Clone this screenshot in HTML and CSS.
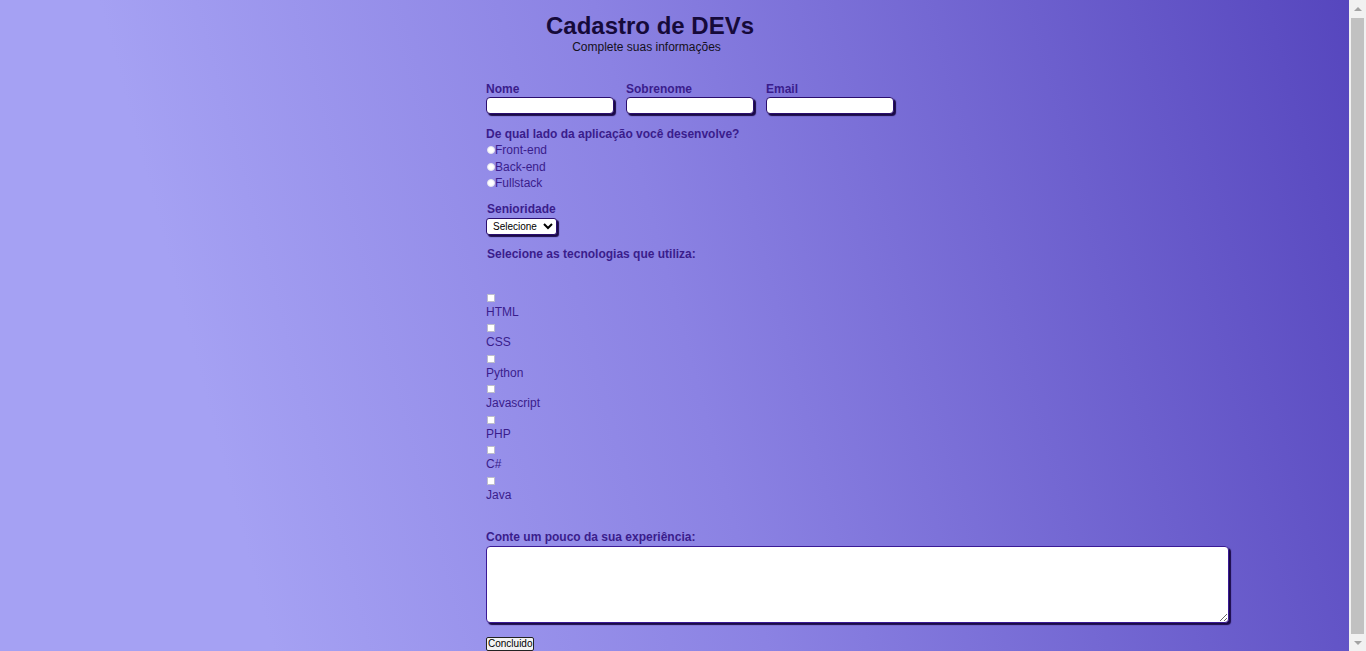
FILE: index.html
```html
<!DOCTYPE html>
<html lang="pt-BR">
<head>
<meta charset="utf-8">
<title>Cadastro de DEVs</title>
<link rel="stylesheet" href="styles.css">
</head>
<body>
<div class="page">
  <header class="header">
    <h1 class="title">Cadastro de DEVs</h1>
    <p class="subtitle">Complete suas informações</p>
  </header>
  <form class="form">
    <div class="row-fields">
      <div class="field">
        <label class="lbl" for="nome">Nome</label>
        <input class="txt" id="nome" type="text">
      </div>
      <div class="field">
        <label class="lbl" for="sobrenome">Sobrenome</label>
        <input class="txt" id="sobrenome" type="text">
      </div>
      <div class="field">
        <label class="lbl" for="email">Email</label>
        <input class="txt" id="email" type="email">
      </div>
    </div>

    <div class="group">
      <p class="lbl lbl-q">De qual lado da aplicação você desenvolve?</p>
      <label class="radio-row"><input class="radio" type="radio" name="lado">Front-end</label>
      <label class="radio-row"><input class="radio" type="radio" name="lado">Back-end</label>
      <label class="radio-row"><input class="radio" type="radio" name="lado">Fullstack</label>
    </div>

    <div class="group-sen">
      <label class="lbl lbl-sen" for="sen">Senioridade</label>
      <select class="select" id="sen">
        <option>Selecione</option>
        <option>Júnior</option>
        <option>Pleno</option>
        <option>Sênior</option>
      </select>
    </div>

    <p class="lbl lbl-tech">Selecione as tecnologias que utiliza:</p>
    <div class="techs">
      <div class="tech"><input class="check" type="checkbox" id="t1"><label class="tech-lbl" for="t1">HTML</label></div>
      <div class="tech"><input class="check" type="checkbox" id="t2"><label class="tech-lbl" for="t2">CSS</label></div>
      <div class="tech"><input class="check" type="checkbox" id="t3"><label class="tech-lbl" for="t3">Python</label></div>
      <div class="tech"><input class="check" type="checkbox" id="t4"><label class="tech-lbl" for="t4">Javascript</label></div>
      <div class="tech"><input class="check" type="checkbox" id="t5"><label class="tech-lbl" for="t5">PHP</label></div>
      <div class="tech"><input class="check" type="checkbox" id="t6"><label class="tech-lbl" for="t6">C#</label></div>
      <div class="tech"><input class="check" type="checkbox" id="t7"><label class="tech-lbl" for="t7">Java</label></div>
    </div>

    <label class="lbl lbl-exp" for="exp">Conte um pouco da sua experiência:</label>
    <textarea class="area" id="exp"></textarea>

    <button class="btn" type="submit">Concluido</button>
  </form>
</div>

<div class="scrollbar" aria-hidden="true">
  <div class="sb-arrow sb-up"></div>
  <div class="sb-track"><div class="sb-thumb"></div></div>
  <div class="sb-arrow sb-down"></div>
</div>
</body>
</html>
```

FILE: styles.css
```css
html, body {
  margin: 0;
  padding: 0;
}

body {
  min-height: 100%;
  background: linear-gradient(75deg, #a5a1f3 18%, #8b82e3 50%, #5545bd 100%);
  font-family: "Liberation Sans", Arial, sans-serif;
  color: #3a1d8c;
}

.page {
  padding: 12px 17px 20px 486px;
}

.header {
  width: 328px;
  text-align: center;
}

.title {
  margin: 0;
  font-size: 24px;
  line-height: 28px;
  font-weight: bold;
  color: #160a3a;
}

.subtitle {
  margin: 0;
  padding-right: 7px;
  font-size: 12px;
  line-height: 14px;
  color: #141020;
}

.form {
  display: flex;
  flex-direction: column;
  align-items: flex-start;
}

.lbl {
  display: block;
  margin: 0;
  font-size: 12px;
  line-height: 14px;
  font-weight: bold;
  color: #3a1d8c;
}

.row-fields {
  display: flex;
  gap: 12px;
  margin-top: 28px;
}

.field {
  display: flex;
  flex-direction: column;
}

.txt {
  box-sizing: border-box;
  width: 128px;
  height: 17px;
  margin: 1px 0 0 0;
  padding: 0 4px;
  border: 1px solid #2a0e6e;
  border-radius: 4px;
  background: #fff;
  box-shadow: 2px 2px 1px #1a0946;
  font-size: 12px;
}

.group {
  margin-top: 13px;
  display: flex;
  flex-direction: column;
}

.lbl-q {
  margin-bottom: 1px;
}

.radio-row {
  display: flex;
  align-items: center;
  height: 16.5px;
  font-size: 12px;
  line-height: 14px;
  color: #3a1d8c;
}

.radio {
  appearance: none;
  -webkit-appearance: none;
  box-sizing: border-box;
  width: 8px;
  height: 8px;
  margin: 0 0 0 1px;
  border-radius: 50%;
  background: #fff;
  border: 1px solid #e4e4f0;
}

.group-sen {
  margin-top: 10px;
  display: flex;
  flex-direction: column;
  align-items: flex-start;
}

.lbl-sen {
  margin-left: 1px;
}

.select {
  box-sizing: border-box;
  width: 71px;
  height: 17px;
  margin: 2px 0 0 0;
  padding: 0 0 0 2px;
  border: 1px solid #2a0e6e;
  border-radius: 3px;
  background: #fff;
  box-shadow: 2px 2px 1px #1a0946;
  font-family: "Liberation Sans", Arial, sans-serif;
  font-size: 10px;
  color: #000;
}

.lbl-tech {
  margin-top: 12px;
  margin-left: 1px;
}

.techs {
  margin-top: 33.5px;
  display: flex;
  flex-direction: column;
}

.tech {
  display: flex;
  flex-direction: column;
  align-items: flex-start;
  height: 30.45px;
}

.check {
  appearance: none;
  -webkit-appearance: none;
  box-sizing: border-box;
  width: 8px;
  height: 8px;
  margin: 0 0 3px 1px;
  background: #fff;
  border: 1px solid #bdbdcc;
}

.tech-lbl {
  font-size: 12px;
  line-height: 14px;
  color: #3a1d8c;
}

.lbl-exp {
  margin-top: 23px;
}

.area {
  box-sizing: border-box;
  width: 743px;
  height: 77px;
  margin: 1.5px 0 0 0;
  border: 1.5px solid #3a1a96;
  border-radius: 4px;
  background: #fff;
  box-shadow: 2px 2px 1px #1a0946;
  resize: both;
}

.btn {
  margin-top: 14px;
  box-sizing: border-box;
  height: 14px;
  padding: 0 1px;
  border: 1px solid #222;
  border-radius: 2px;
  background: #f3f3f3;
  font-family: "Liberation Sans", Arial, sans-serif;
  font-size: 10px;
  line-height: 11px;
  color: #000;
}

/* simulated browser scrollbar */
.scrollbar {
  position: fixed;
  top: 0;
  right: 0;
  width: 17px;
  height: 100vh;
  background: #f1f1f1;
  display: flex;
  flex-direction: column;
}

.sb-arrow {
  height: 17px;
  display: flex;
  align-items: center;
  justify-content: center;
}

.sb-up::before,
.sb-down::before {
  content: "";
  width: 0;
  height: 0;
  border-left: 4px solid transparent;
  border-right: 4px solid transparent;
}

.sb-up::before {
  border-bottom: 4px solid #a3a3a3;
}

.sb-down::before {
  border-top: 4px solid #a3a3a3;
}

.sb-track {
  flex: 1;
  padding: 1px 2px 0 2px;
  display: flex;
}

.sb-thumb {
  flex: 1;
  background: #c1c1c1;
}
```
